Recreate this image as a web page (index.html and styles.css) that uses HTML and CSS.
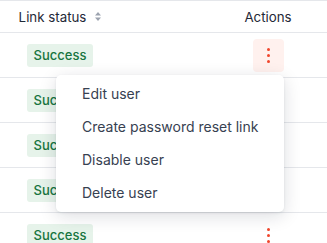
FILE: index.html
```html
<!DOCTYPE html>
<html lang="en">
<head>
  <meta charset="UTF-8" />
  <meta name="viewport" content="width=device-width, initial-scale=1.0" />
  <title>Users</title>
  <link rel="stylesheet" href="styles.css">
</head>
<body>
  <div class="table">
    <div class="row head">
      <div class="cell status">Link status
        <svg class="sort" width="6" height="9" viewBox="0 0 6 9"><path d="M3 0L6 3.5H0Z M3 9L0 5.5H6Z" fill="#9ca3af"/></svg>
      </div>
      <div class="cell actions">Actions</div>
    </div>
    <div class="row">
      <div class="cell status"><span class="badge">Success</span></div>
      <div class="cell actions"><button class="kebab open"><i></i><i></i><i></i></button></div>
    </div>
    <div class="row">
      <div class="cell status"><span class="badge">Success</span></div>
      <div class="cell actions"><button class="kebab"><i></i><i></i><i></i></button></div>
    </div>
    <div class="row">
      <div class="cell status"><span class="badge">Success</span></div>
      <div class="cell actions"><button class="kebab"><i></i><i></i><i></i></button></div>
    </div>
    <div class="row">
      <div class="cell status"><span class="badge">Success</span></div>
      <div class="cell actions"><button class="kebab"><i></i><i></i><i></i></button></div>
    </div>
    <div class="row">
      <div class="cell status"><span class="badge">Success</span></div>
      <div class="cell actions"><button class="kebab"><i></i><i></i><i></i></button></div>
    </div>

    <ul class="menu">
      <li>Edit user</li>
      <li>Create password reset link</li>
      <li>Disable user</li>
      <li>Delete user</li>
    </ul>
  </div>
</body>
</html>
```

FILE: styles.css
```css
* { margin: 0; padding: 0; box-sizing: border-box; font-family: 'Inter', 'Noto Sans', sans-serif; }
body { background: #fff; color: #1f2937; overflow: hidden; }
.table { position: relative; border-top: 1px solid #e5e7eb; }
.row {
  display: flex;
  align-items: center;
  height: 45px;
  border-bottom: 1px solid #e5e7eb;
}
.row.head { height: 32px; font-size: 13.3px; color: #1f2937; }
.cell { display: flex; align-items: center; justify-content: center; }
.status { width: 120px; }
.actions { width: 92px; margin-left: auto; margin-right: 13px; }
.sort { margin-left: 9px; }
.badge {
  display: inline-block;
  padding: 0 7px;
  height: 23px;
  line-height: 23px;
  border-radius: 3px;
  background: #e6f3ea;
  color: #18753f;
  font-size: 13px;
  font-weight: 500;
}
.kebab {
  width: 31px;
  height: 33px;
  border: none;
  border-radius: 4px;
  background: transparent;
  display: flex;
  flex-direction: column;
  align-items: center;
  justify-content: center;
  gap: 3px;
}
.kebab.open { background: #fff1ee; }
.kebab i { width: 3px; height: 3px; border-radius: 50%; background: #f1462c; }
.menu {
  position: absolute;
  left: 56px;
  top: 74px;
  width: 228px;
  list-style: none;
  background: #fff;
  border-radius: 5px;
  padding: 2px 0 3px;
  box-shadow: 0 4px 18px rgba(15, 23, 42, 0.14), 0 1px 3px rgba(15, 23, 42, 0.08);
}
.menu li {
  height: 33px;
  line-height: 33px;
  padding-left: 26px;
  font-size: 14px;
  color: #374151;
}
```
